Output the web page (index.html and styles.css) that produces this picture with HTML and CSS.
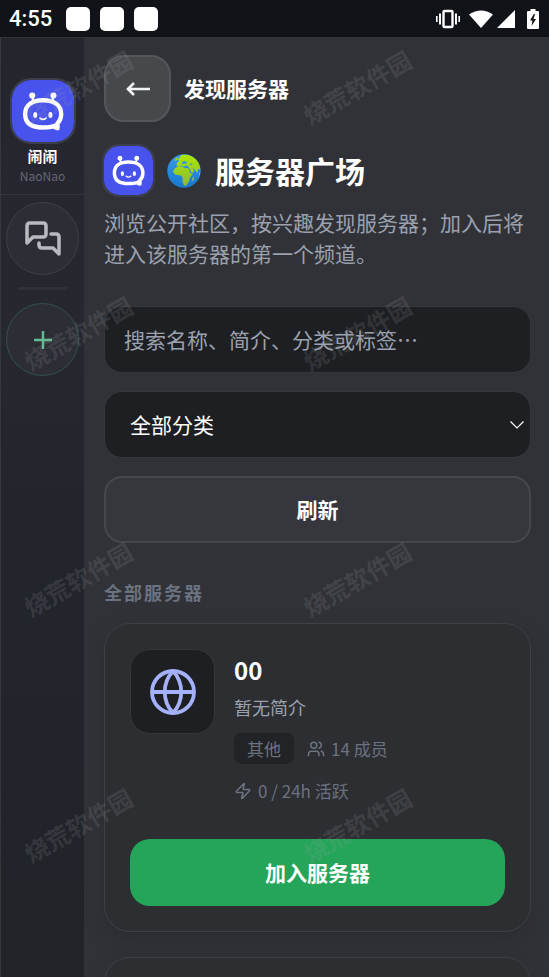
FILE: index.html
```html
<!DOCTYPE html>
<html lang="zh-CN">
<head>
<meta charset="utf-8">
<meta name="viewport" content="width=device-width, initial-scale=1">
<title>发现服务器</title>
<link rel="stylesheet" href="styles.css">
</head>
<body>
<svg class="defs" aria-hidden="true">
  <symbol id="mascot" viewBox="0 0 184 184">
    <path d="M63 62 L60 48 M120 62 L123 48" fill="none" stroke="#fff" stroke-width="7" stroke-linecap="round"/>
    <circle cx="60" cy="46" r="9" fill="#fff"/>
    <circle cx="123" cy="46" r="9" fill="#fff"/>
    <path d="M131 134 C121 140 109 141 92 141 C57 141 39 127 39 101 C39 74 60 60 92 60 C124 60 146 74 146 101 C146 113 142 122 135 128 L135 143 Q129 142 124 137" fill="none" stroke="#fff" stroke-width="13" stroke-linejoin="round"/>
    <ellipse cx="69" cy="104" rx="6" ry="9" fill="#fff"/>
    <ellipse cx="114" cy="104" rx="6" ry="9" fill="#fff"/>
    <path d="M83 113 Q92 121 101 113" fill="none" stroke="#fff" stroke-width="5" stroke-linecap="round"/>
  </symbol>
</svg>

<header class="status">
  <span class="time">4:55</span>
  <span class="notes"><i></i><i></i><i></i></span>
  <span class="signals">
    <svg width="26" height="20" viewBox="0 0 26 20" fill="none" stroke="#fff"><rect x="8.5" y="2" width="9" height="16" rx="1" stroke-width="2.4"/><path d="M5 4.5v11M21 4.5v11" stroke-width="2"/><path d="M1.8 7v6M24.2 7v6" stroke-width="1.6"/></svg>
    <svg width="24" height="20" viewBox="0 0 24 20"><path d="M0 5.5Q12-2.500 24 5.500L12 19Z" fill="#fff"/></svg>
    <svg width="18" height="20" viewBox="0 0 18 20"><path d="M18 1V19H0Z" fill="#fff"/></svg>
    <svg class="battery" width="12" height="20" viewBox="0 0 12 20"><path d="M3.500 0h5v2H11q1 0 1 1v16q0 1-1 1H1q-1 0-1-1V3q0-1 1-1h2.500Z" fill="#fff"/><path d="M6.800 5L3 11.500h2.400L4.600 17 9 10H6.500L8 5Z" fill="#111318"/></svg>
  </span>
</header>

<div class="app">
  <nav class="rail">
    <a class="brand" href="#home">
      <svg class="logo logo-lg"><use href="#mascot"/></svg>
      <b>闹闹</b>
      <small>NaoNao</small>
    </a>
    <button class="round" type="button" aria-label="消息">
      <svg width="38" height="38" viewBox="0 0 38 38" fill="none" stroke="#b9bac0" stroke-width="3.500" stroke-linecap="round" stroke-linejoin="round"><path d="M3 23V6q0-3 3-3h13q3 0 3 3v8q0 3-3 3H9Z"/><path d="M27 14h5q3 0 3 3v17l-6-6H18q-3 0-3-3v-2"/></svg>
    </button>
    <hr>
    <button class="round add" type="button" aria-label="添加服务器">
      <svg width="18" height="20" viewBox="0 0 18 20" stroke="#61bd91" stroke-width="2.500"><path d="M9 1v18M0 10h18"/></svg>
    </button>
  </nav>

  <main>
    <div class="topbar">
      <button class="back" type="button" aria-label="返回">
        <svg width="26" height="14" viewBox="0 0 26 14" fill="none" stroke="#f3f3f5" stroke-width="2.600"><path d="M25 7H2M9 1L3 7l6 6"/></svg>
      </button>
      <strong>发现服务器</strong>
    </div>

    <div class="heading">
      <svg class="logo logo-sm"><use href="#mascot"/></svg>
      <svg class="earth" viewBox="0 0 102 102">
        <defs><linearGradient id="sea" x1="0" y1="0" x2="0" y2="1"><stop offset="0" stop-color="#3b9be8"/><stop offset="1" stop-color="#1679cf"/></linearGradient><linearGradient id="land" x1="0" y1="0" x2="0" y2="1"><stop offset="0" stop-color="#aeea00"/><stop offset="1" stop-color="#8ab83c"/></linearGradient></defs>
        <circle cx="51" cy="51" r="50" fill="url(#sea)"/>
        <path d="M43 3Q70-2 86 16Q99 29 100 48L94 44 91 57 83 47 76 41 82 53 74 57 65 40 60 34 50 38 42 34 35 38 28 33 31 25 37 22 33 17ZM31 38L44 37 52 42 64 43 70 58 78 60 69 70 67 80 59 94 51 95 46 82 47 70 40 64 25 62 18 54 22 44ZM76 72l5-5-1 12-5 3ZM25 15l8-6-2 8-7 4ZM96 58l4-3-3 13Z" fill="url(#land)"/>
        <path d="M43 28l8-8 4 3 8 0-5 5-8 2ZM66 31l9-3 2 3-7 3Z" fill="#2f93df"/>
      </svg>
      <h1>服务器广场</h1>
    </div>
    <p class="intro">浏览公开社区，按兴趣发现服务器；加入后将进入该服务器的第一个频道。</p>

    <form class="filters">
      <input type="search" aria-label="搜索服务器" placeholder="搜索名称、简介、分类或标签…">
      <div class="picker">
        <select aria-label="分类"><option>全部分类</option></select>
        <svg width="14" height="8" viewBox="0 0 14 8" fill="none" stroke="#fff" stroke-width="1.200"><path d="M.5.500L7 7l6.500-6.500"/></svg>
      </div>
      <button type="button">刷新</button>
    </form>

    <h2>全部服务器</h2>
    <div class="list">
      <article class="card">
        <div class="summary">
          <div class="tile">
            <svg width="46" height="46" viewBox="0 0 46 46" fill="none" stroke="#a5b0fb" stroke-width="3.800"><circle cx="23" cy="23" r="21"/><path d="M2 23h42M23 2C12 14 12 32 23 44C34 32 34 14 23 2Z"/></svg>
          </div>
          <div class="info">
            <h3>00</h3>
            <p>暂无简介</p>
            <div class="meta">
              <span class="tag">其他</span>
              <span class="stat"><svg width="18" height="18" viewBox="0 0 24 24"><path d="M16 21v-2a4 4 0 0 0-4-4H6a4 4 0 0 0-4 4v2M22 21v-2a4 4 0 0 0-3-3.870M16 3.130a4 4 0 0 1 0 7.750"/><circle cx="9" cy="7" r="4"/></svg>14 成员</span>
              <span class="stat"><svg width="18" height="18" viewBox="0 0 24 24"><path d="M4 14a1 1 0 0 1-.78-1.630l9.900-10.200a.5.500 0 0 1 .86.460l-1.920 6.020A1 1 0 0 0 13 10h7a1 1 0 0 1 .78 1.630l-9.900 10.200a.5.500 0 0 1-.86-.460l1.920-6.020A1 1 0 0 0 11 14z"/></svg>0 / 24h 活跃</span>
            </div>
          </div>
        </div>
        <button class="join" type="button">加入服务器</button>
      </article>
      <article class="card"></article>
    </div>
  </main>
</div>

<div class="watermarks" aria-hidden="true">
  <span>烧荒软件园</span><span>烧荒软件园</span>
  <span>烧荒软件园</span><span>烧荒软件园</span>
  <span>烧荒软件园</span><span>烧荒软件园</span>
  <span>烧荒软件园</span><span>烧荒软件园</span>
</div>
</body>
</html>
```
FILE: styles.css
```css
* { box-sizing: border-box; }

body {
  margin: 0;
  height: 100vh;
  display: flex;
  flex-direction: column;
  position: relative;
  overflow: hidden;
  background: #313237;
  color: #fff;
  font-family: "Noto Sans CJK SC", sans-serif;
  font-size: 21px;
}

h1, h2, h3, p { margin: 0; }
svg { display: block; flex: none; }
button, input, select { font: inherit; color: inherit; margin: 0; }
button { display: flex; align-items: center; justify-content: center; padding: 0; }
.defs { position: absolute; width: 0; height: 0; }

/* status bar */
.status {
  flex: none;
  display: flex;
  align-items: center;
  height: 37px;
  padding: 0 10px 0 9px;
  background: #111318;
}
.time { font: 500 22px Roboto, sans-serif; }
.notes { display: flex; gap: 10px; margin-left: 14px; }
.notes i { width: 24px; height: 24px; border-radius: 5px; background: #fff; }
.signals { display: flex; gap: 8px; margin-left: auto; align-items: center; }
.signals svg + svg + svg { margin-left: -4px; }
.signals .battery.battery { margin-left: 4px; }

.app { flex: 1; min-height: 0; display: flex; }

/* server rail */
.rail {
  flex: none;
  width: 84px;
  display: flex;
  flex-direction: column;
  align-items: center;
  border-top: 1px solid #30323a;
  border-left: 1px solid #36383e;
  background: linear-gradient(#24262e, #272730 30%, #23252d 50%, #202328);
}
.brand {
  width: 100%;
  height: 157px;
  padding-top: 42px;
  display: flex;
  flex-direction: column;
  align-items: center;
  border-bottom: 1px solid #34353e;
  color: #fff;
  text-decoration: none;
}
.logo { background: #4853ed; outline: 2px solid #3e3f4c; }
.logo-lg { width: 62px; height: 62px; border-radius: 19px; margin-bottom: 4px; }
.brand b { font-size: 15px; line-height: 20px; }
.brand small { font-size: 12px; line-height: 19px; color: #646975; }
.round {
  width: 73px;
  height: 73px;
  margin-top: 7px;
  border: 1px solid #3e3f48;
  border-radius: 50%;
  background: #2d2d36;
}
.rail hr { width: 49px; height: 3px; margin: 12px 0 6px; border: 0; background: #30313a; }
.add { border-color: #315250; }

/* page */
main { flex: 1; min-width: 0; padding: 18px 18px 0 20px; overflow: hidden; }
.topbar { display: flex; align-items: center; gap: 13px; }
.topbar strong { line-height: 30px; padding-bottom: 2px; }
.back {
  width: 67px;
  height: 67px;
  border: 2px solid #55565a;
  border-radius: 20px;
  background: #47484c;
}
.heading { display: flex; align-items: center; margin-top: 24px; }
.logo-sm { width: 49px; height: 49px; border-radius: 15px; }
.earth { width: 34px; height: 34px; margin: 0 14px; }
h1 { font-size: 30px; line-height: 49px; }
.intro { margin: 12px 0 0; line-height: 31px; color: #9ba1ae; }

.filters { display: flex; flex-direction: column; gap: 18px; margin-top: 37px; }
.filters input, .filters select, .filters button {
  width: 100%;
  height: 67px;
  border: 1px solid #36373b;
  border-radius: 18px;
  background: #1e1f23;
}
.filters input { padding: 0 19px 2px; appearance: none; outline: 0; }
.filters input::placeholder { color: #9ba1ae; opacity: 1; }
.picker { position: relative; }
.filters select { display: block; padding: 0 25px 2px; appearance: none; }
.picker svg { position: absolute; right: 7px; top: 30px; pointer-events: none; }
.filters button { padding-bottom: 2px; border: 2px solid #46474b; background: #36373c; font-weight: 700; }

h2 { margin: 36px 0 18px; font-size: 18px; line-height: 26px; letter-spacing: 2px; color: #6b7280; }
.list { display: grid; gap: 25px; }
.card {
  min-height: 120px;
  padding: 25px;
  border: 1px solid #3f4044;
  border-radius: 26px;
  background: #2d2e32;
  box-shadow: 0 8px 16px #2c2d33;
}
.summary { display: flex; gap: 19px; }
.tile {
  flex: none;
  width: 85px;
  height: 85px;
  display: grid;
  place-items: center;
  border: 1px solid #36373b;
  border-radius: 20px;
  background: #1e1f23;
}
.info { max-width: 200px; }
.info h3 { font-size: 24px; line-height: 41px; }
.info p { font-size: 18px; line-height: 34px; color: #9ba1ae; }
.meta {
  display: flex;
  flex-wrap: wrap;
  gap: 11px 13px;
  margin-top: 9px;
  font-size: 17px;
  line-height: 31px;
  color: #6b7280;
}
.tag { padding: 0 13px; border-radius: 8px; background: #222327; }
.stat { display: flex; align-items: center; gap: 6px; }
.stat svg { fill: none; stroke: #6b7280; stroke-width: 2; stroke-linecap: round; stroke-linejoin: round; }
.join {
  width: 100%;
  height: 67px;
  margin-top: 33px;
  padding-bottom: 2px;
  border: 0;
  border-radius: 20px;
  background: #25a55a;
  font-weight: 700;
}

/* overlay marks */
.watermarks {
  position: absolute;
  inset: 0;
  display: grid;
  grid-template-columns: 156px 402px;
  grid-auto-rows: 246px;
  align-content: start;
  margin-top: -36px;
  place-items: center;
  overflow: hidden;
  pointer-events: none;
}
.watermarks span {
  rotate: -30deg;
  white-space: nowrap;
  font-size: 24px;
  font-weight: 700;
  line-height: 24px;
  color: rgb(160 160 165 / 18%);
}
```
